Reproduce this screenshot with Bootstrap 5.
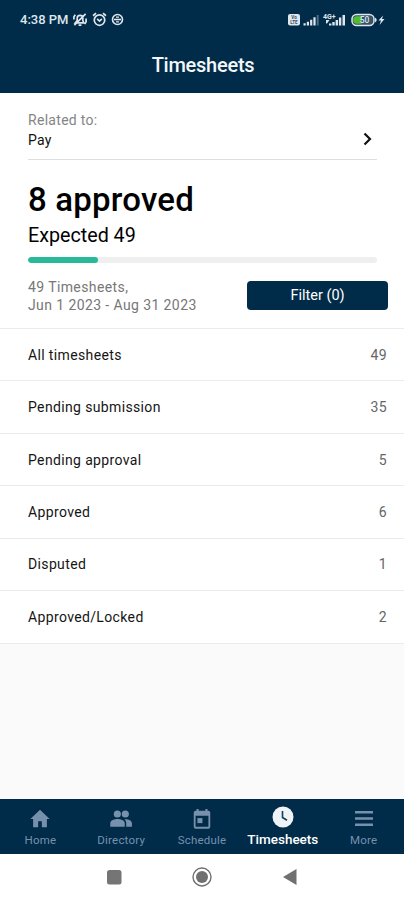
<!DOCTYPE html>
<html lang="en">
<head>
<meta charset="utf-8">
<meta name="viewport" content="width=device-width, initial-scale=1">
<title>Timesheets</title>
<link href="https://cdn.jsdelivr.net/npm/bootstrap@5.3.0/dist/css/bootstrap.min.css" rel="stylesheet">
<style>
:root { --navy: #002b49; --tab: #7791ad; }
body { font-family: Roboto, sans-serif; color: #111; background: #fafafa; font-size: 14px; line-height: 18px; letter-spacing: .3px; }
svg { display: block; flex: none; }
.screen { height: 900px; overflow: hidden; }
.app-head { background: var(--navy); height: 93px; color: #f4f7fa; }
.status { height: 39px; padding: 0 17px 0 20px; font-size: 13px; font-weight: 500; letter-spacing: 0; color: #dfe6ec; }
.status-icons { gap: 4px; margin-left: 3px; }
.title { font-size: 20px; font-weight: 500; line-height: 52px; letter-spacing: -.25px; margin: 0; padding-left: 2px; }
.summary { height: 235px; padding: 17px 27px 0 28px; }
.related { height: 49.5px; border-bottom: 1px solid #dedede; line-height: 20px; padding-bottom: 9px; }
.muted-text { color: #858585; }
.total { font-size: 33px; font-weight: 500; line-height: 40px; letter-spacing: .2px; margin: 20px 0 0; color: #000; }
.expected { font-size: 19.7px; line-height: 28px; letter-spacing: 0; margin: 2px 0 0; color: #000; }
.meter { height: 6px; border-radius: 3px; background: #efefef; margin-top: 7px; }
.meter .progress-bar { background: #27b99a; border-radius: 3px; }
.range { color: #777; margin-right: -11px; margin-top: 15px; letter-spacing: .4px; }
.filter-btn { width: 141px; height: 29px; padding: 0; margin-bottom: 1px; background: var(--navy); border: 0; border-radius: 4px; color: #fff; font-size: 14.5px; line-height: 29px; letter-spacing: 0; }
.status-list .list-group-item { height: 52.45px; padding: 0 17px 0 28px; border-color: #ececec; background: #fff; color: #151515; border-width: 0 0 1px; letter-spacing: .36px; }
.status-list .list-group-item:first-child { border-top-width: 1px; height: 53.4px; }
.status-list .list-group-item:last-child { border-bottom-width: 1px; }
.amount { color: #666; }
.tabs { height: 54.5px; background: var(--navy); }
.tabs .nav-link { width: 81px; padding: 9px 0 0; color: var(--tab); font-size: 11.5px; line-height: 14px; letter-spacing: .2px; }
.tabs .nav-link svg { height: 22px; margin-bottom: 3px; }
.tabs .nav-link.active { color: #fff; font-size: 13.5px; font-weight: 500; letter-spacing: 0; padding-top: 7px; }
.tabs .nav-link.active svg { margin-bottom: 4px; }
.system-nav { height: 46.5px; background: #fff; gap: 66px; }
</style>
</head>
<body>
<div class="screen d-flex flex-column">
  <header class="app-head">
    <div class="status d-flex align-items-center justify-content-between">
      <div class="d-flex align-items-center">
        <span>4:38 PM</span>
        <div class="status-icons d-flex align-items-center">
          <svg width="16" height="15" viewBox="0 0 16 16" fill="none" stroke="currentColor" stroke-width="1.8"><path d="M3 11.5h9L11 9V6.500a3 3 0 0 0-6 0V9zM6.500 14h3M2 14 14 2M1.500 8V5L3 3M14.500 7v3.500L13 13"/></svg>
          <svg width="15" height="15" viewBox="0 0 14 14" fill="none" stroke="currentColor" stroke-width="1.6"><circle cx="7" cy="7.500" r="4.900"/><path d="M1 3.500 3.700 1M13 3.500 10.300 1M4.800 6.500 7 8.500l2.200-2"/></svg>
          <svg width="13" height="13" viewBox="0 0 13 13" fill="none" stroke="currentColor" stroke-width="1.600"><circle cx="6.500" cy="6.500" r="5"/><path d="M3 6.500h7"/><path stroke-width="1.200" d="M5 4.200h3M5 8.800h3"/></svg>
        </div>
      </div>
      <svg width="100" height="16" viewBox="0 0 100 16" fill="currentColor">
        <rect x="1" y="2" width="12" height="11.500" rx="2"/>
        <text x="7" y="7.300" font-size="4.500" font-weight="700" fill="#304f68" text-anchor="middle">Vo</text><text x="7" y="12" font-size="4.500" font-weight="700" fill="#304f68" text-anchor="middle">LTE</text>
        <path d="M16.500 11.300h2.200v2.200h-2.200zM19.800 9.800H22v3.700h-2.200zM23.100 7.800h2.200v5.700h-2.200zM26.400 5.300h2.200v8.200h-2.200z"/><path opacity=".35" d="M29.700 3h2v10.500h-2z"/>
        <text x="36" y="7" font-size="7" font-weight="700">4G+</text>
        <path d="M39 8h3.500L40 11.500h-1zM42 11.500h2.400v2H42zM45.300 10h2.400v3.500h-2.400zM48.600 8h2.400v5.500h-2.400zM51.900 5.500h2.400v8h-2.400zM55.500 3H58v10.500h-2.500z"/>
        <rect x="65" y="2.500" width="22" height="11" rx="4.500" fill="#35546a" stroke="currentColor" stroke-width="1.500"/><path fill="#52bd2c" d="M70 4.200h4.500v7.600H70a3.800 3.800 0 0 1 0-7.600z"/><path d="M88 5.500q3.500 2.500 0 5z"/>
        <text x="77.500" y="11" font-size="8.500" font-weight="500" text-anchor="middle">50</text>
        <path d="m96 3.500-4.500 5h2.500L92.500 13l5-6h-2.500z"/>
      </svg>
    </div>
    <h1 class="title text-center">Timesheets</h1>
  </header>

  <main class="flex-grow-1">
    <section class="summary bg-white">
      <div class="related d-flex align-items-end justify-content-between">
        <div><div class="muted-text">Related to:</div><div>Pay</div></div>
        <svg class="mb-1" width="18" height="14" viewBox="0 0 18 14" fill="none" stroke="#111" stroke-width="2.200"><path d="m5.500 1.500 5.500 5.500-5.500 5.500"/></svg>
      </div>
      <h2 class="total">8 approved</h2>
      <p class="expected">Expected 49</p>
      <div class="progress meter" role="progressbar" aria-label="Approved timesheets"><div class="progress-bar" style="width:20%"></div></div>
      <div class="range d-flex justify-content-between align-items-center">
        <div>49 Timesheets,<br>Jun 1 2023 - Aug 31 2023</div>
        <button class="btn filter-btn" type="button">Filter (0)</button>
      </div>
    </section>
    <ul class="list-group list-group-flush status-list">
      <li class="list-group-item d-flex justify-content-between align-items-center">All timesheets<span class="amount">49</span></li>
      <li class="list-group-item d-flex justify-content-between align-items-center">Pending submission<span class="amount">35</span></li>
      <li class="list-group-item d-flex justify-content-between align-items-center">Pending approval<span class="amount">5</span></li>
      <li class="list-group-item d-flex justify-content-between align-items-center">Approved<span class="amount">6</span></li>
      <li class="list-group-item d-flex justify-content-between align-items-center">Disputed<span class="amount">1</span></li>
      <li class="list-group-item d-flex justify-content-between align-items-center">Approved/Locked<span class="amount">2</span></li>
    </ul>
  </main>

  <nav class="tabs nav flex-nowrap">
    <a class="nav-link d-flex flex-column align-items-center" href="#"><svg width="24" height="24" viewBox="0 0 24 24" fill="currentColor"><path d="M10 21v-6.500h4V21h5.500v-9H22.500L12 2 1.500 12h3v9z"/></svg>Home</a>
    <a class="nav-link d-flex flex-column align-items-center" href="#"><svg width="24" height="24" viewBox="0 0 24 24" fill="currentColor"><circle cx="8" cy="6.500" r="3.900"/><circle cx="16.700" cy="6.500" r="3.900"/><path d="M.300 20.500v-4c0-3 5-4.500 7.900-4.500s7.900 1.500 7.900 4.500v4zM17.700 20.500v-4c0-1.800-.8-3.200-2-4.200 3.200-.5 8.200 1.100 8.200 4.200v4z"/></svg>Directory</a>
    <a class="nav-link d-flex flex-column align-items-center" href="#"><svg width="24" height="24" viewBox="0 0 24 24" fill="currentColor"><path fill-rule="evenodd" d="M19 3h-1V1h-2.300v2H8.300V1H6v2H5a2 2 0 0 0-2 2v15.500a2 2 0 0 0 2 2h14a2 2 0 0 0 2-2V5a2 2 0 0 0-2-2zm0 17.500H5V8.500h14z"/><path d="M7 11h5.500v5.500H7z"/></svg>Schedule</a>
    <a class="nav-link active d-flex flex-column align-items-center" href="#" aria-current="page"><svg width="22" height="22" viewBox="0 0 22 22"><circle cx="11" cy="11" r="10.500" fill="#eef3f8"/><path d="M10.500 5v6.500l4.500 2.700" fill="none" stroke="#173c58" stroke-width="1.600"/></svg>Timesheets</a>
    <a class="nav-link d-flex flex-column align-items-center" href="#"><svg width="20" height="22" viewBox="0 0 20 22" fill="currentColor"><path d="M1 3h18v2.500H1zM1 9.200h18v2.500H1zM1 15.500h18v2.500H1z"/></svg>More</a>
  </nav>
  <div class="system-nav d-flex justify-content-center align-items-center">
    <svg width="22" height="22" viewBox="0 0 22 22"><rect x="4" y="4" width="14.500" height="14.500" rx="2.500" fill="#757575"/></svg>
    <svg width="22" height="22" viewBox="0 0 22 22"><circle cx="11" cy="11" r="9" fill="none" stroke="#707070" stroke-width="1.400"/><circle cx="11" cy="11" r="6" fill="#707070"/></svg>
    <svg width="22" height="22" viewBox="0 0 22 22"><path d="M17.500 3v16L4 11z" fill="#707070"/></svg>
  </div>
</div>
<script src="https://cdn.jsdelivr.net/npm/bootstrap@5.3.0/dist/js/bootstrap.bundle.min.js"></script>
</body>
</html>
